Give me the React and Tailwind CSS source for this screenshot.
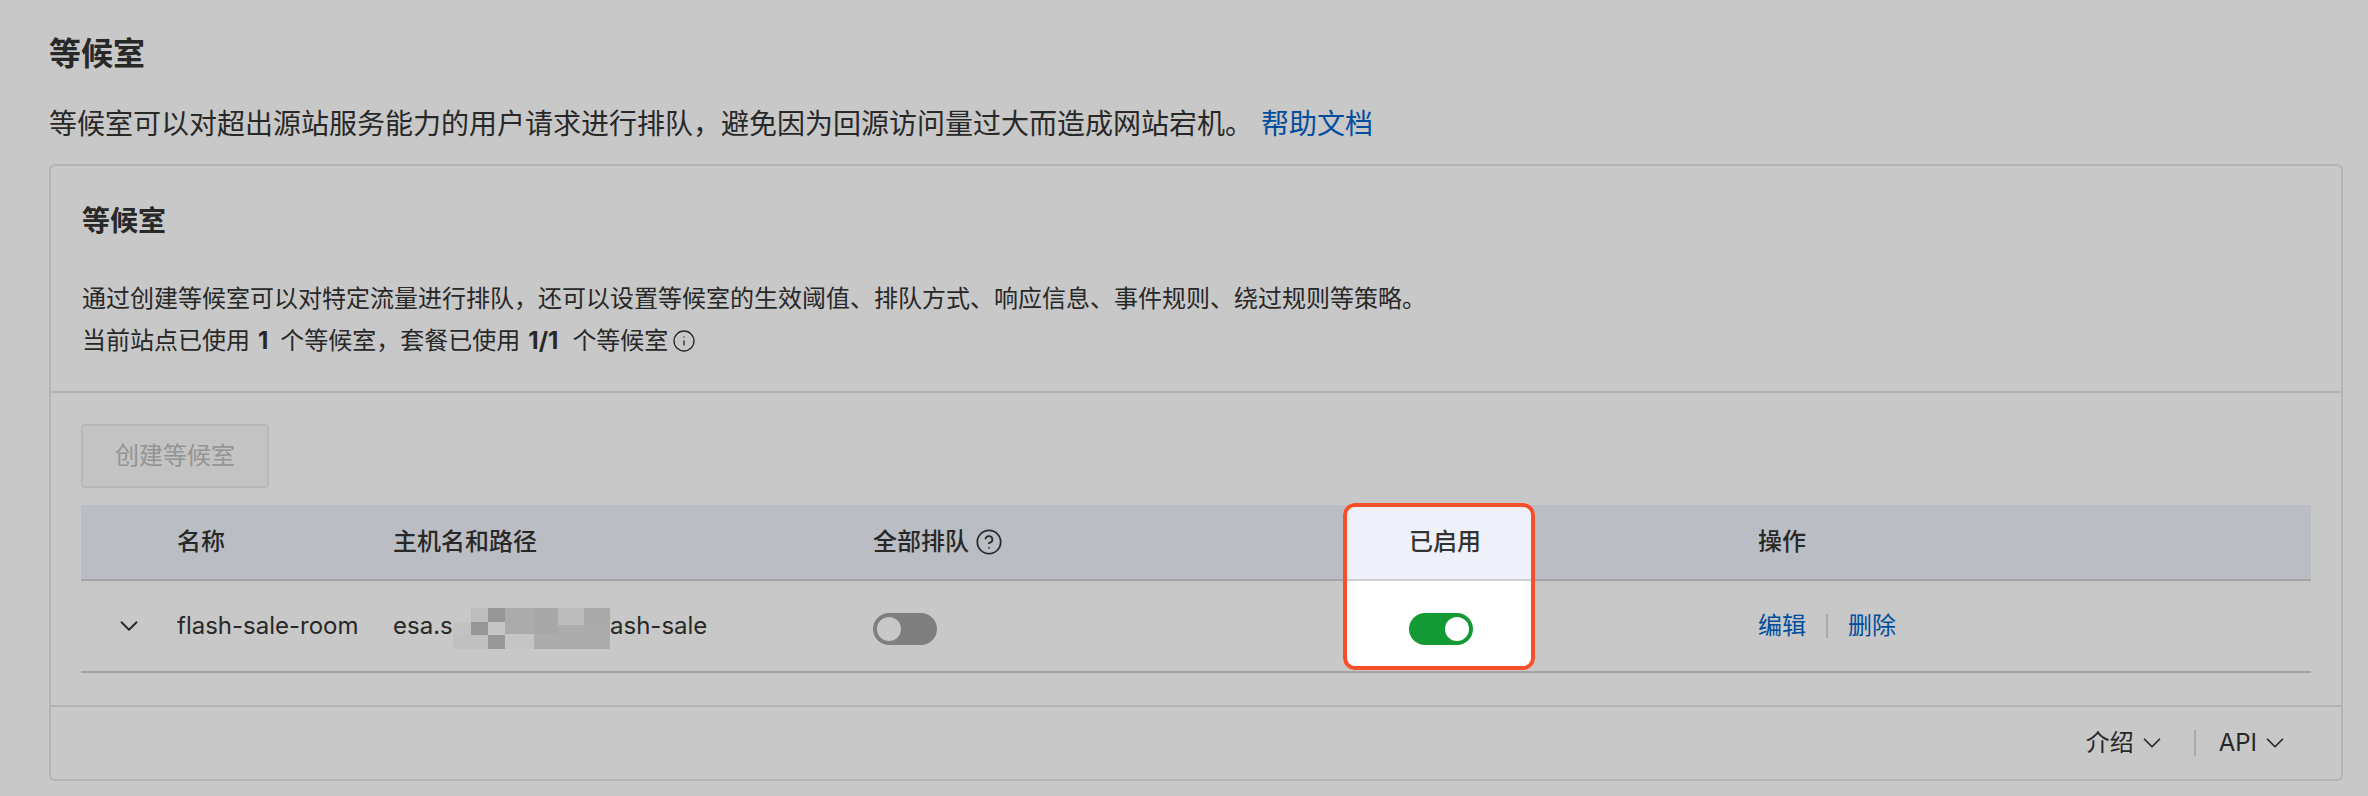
import React from "react";
import { ChevronDown, Info, CircleHelp } from "lucide-react";

function Mosaic() {
  const cells = [
    [18, 0, 17, 14, "#f1f1f1"], [35, 0, 17, 14, "#c0c0c0"], [52, 0, 29, 26, "#dbdbdb"], [81, 0, 24, 26, "#d7d7d7"],
    [105, 0, 26, 17, "#f0f0f0"], [131, 0, 26, 17, "#d9d9d9"], [105, 17, 52, 24, "#dcdcdc"],
    [0, 14, 18, 13, "#f8f8f8"], [18, 14, 17, 13, "#c0c0c0"], [35, 14, 17, 13, "#fdfdfd"],
    [0, 27, 35, 14, "#f5f5f5"], [35, 27, 17, 14, "#c3c3c3"], [52, 26, 29, 15, "#fbfbfb"], [81, 26, 24, 15, "#dcdcdc"],
  ];
  return (
    <svg width="157" height="41" viewBox="0 0 157 41" className="mt-[4px] block shrink-0" shapeRendering="crispEdges">
      {cells.map(([x, y, w, h, c], i) => (
        <rect key={i} x={x} y={y} width={w} height={h} fill={c} />
      ))}
    </svg>
  );
}

function Toggle({ on }) {
  return (
    <div className={`mt-[6px] flex h-8 w-16 items-center rounded-full px-1 ${on ? "justify-end bg-[#149a34]" : "justify-start bg-[#a3a3a3]"}`}>
      <div className="h-6 w-6 rounded-full bg-white" />
    </div>
  );
}

export default function App() {
  return (
    <div className="relative h-[796px] w-[2368px] overflow-hidden bg-white font-['Inter','Noto_Sans_CJK_SC',sans-serif] text-[#333333]">
      <div className="pl-[49px] pr-[25px] pt-[31px]">
        <h1 className="h-[46px] text-[32px] font-bold leading-[46px]">等候室</h1>
        <p className="mt-[25px] flex h-[44px] items-center gap-[8px] text-[28px] leading-[44px]">
          <span>等候室可以对超出源站服务能力的用户请求进行排队，避免因为回源访问量过大而造成网站宕机。</span>
          <a className="text-[#0064c8]">帮助文档</a>
        </p>

        <section className="mt-[18px] h-[617px] rounded-[6px] border-2 border-[#e5e5e5]">
          <div className="h-[227px] border-b-2 border-[#e5e5e5] px-[31px] pt-[35px]">
            <h2 className="h-[40px] text-[28px] font-bold leading-[40px]">等候室</h2>
            <p className="mt-[37px] h-[42px] text-[24px] leading-[42px]">
              通过创建等候室可以对特定流量进行排队，还可以设置等候室的生效阈值、排队方式、响应信息、事件规则、绕过规则等策略。
            </p>
            <p className="flex h-[42px] items-center text-[24px] leading-[42px]">
              <span>当前站点已使用</span>
              <b className="ml-[8px] mr-[12px]">1</b>
              <span>个等候室，套餐已使用</span>
              <b className="ml-[8px] mr-[14px]">1/1</b>
              <span>个等候室</span>
              <Info size={24} strokeWidth={1.3} className="ml-[4px]" />
            </p>
          </div>

          <div className="px-[30px] pt-[31px]">
            <button className="h-[64px] w-[188px] rounded-[4px] border-2 border-[#eaeaea] bg-[#f9f9f9] text-[24px] text-[#bdbdbd]">
              创建等候室
            </button>

            <div className="mt-[17px] grid h-[76px] grid-cols-[96px_216px_480px_536px_349px_1fr] items-center border-b-2 border-[#d1d1d1] bg-[#eef1f9] text-[24px] font-medium">
              <span />
              <span>名称</span>
              <span>主机名和路径</span>
              <span className="flex items-center gap-[6px]">
                全部排队
                <CircleHelp size={28} strokeWidth={1.5} />
              </span>
              <span>已启用</span>
              <span>操作</span>
            </div>

            <div className="grid h-[92px] grid-cols-[96px_216px_480px_536px_349px_1fr] items-center border-b-2 border-[#d1d1d1] text-[24px]">
              <span className="flex justify-center">
                <ChevronDown size={30} strokeWidth={1.5} />
              </span>
              <span>flash-sale-room</span>
              <span className="flex items-center">
                <span className="w-[60px]">esa.s</span>
                <Mosaic />
                <span>ash-sale</span>
              </span>
              <span><Toggle /></span>
              <span><Toggle on /></span>
              <span className="flex items-center text-[#0064c8]">
                <a>编辑</a>
                <span className="mx-[20px] h-[24px] w-[2px] bg-[#d9d9d9]" />
                <a>删除</a>
              </span>
            </div>
          </div>

          <div className="mt-[32px] flex h-[74px] items-center justify-end border-t-2 border-[#e5e5e5] pr-[51px] text-[24px]">
            <span className="flex items-center gap-[3px]">
              介绍
              <ChevronDown size={30} strokeWidth={1.4} />
            </span>
            <span className="ml-[27px] mr-[23px] h-[26px] w-[2px] bg-[#d9d9d9]" />
            <span className="flex items-center gap-[3px]">
              API
              <ChevronDown size={30} strokeWidth={1.4} />
            </span>
          </div>
        </section>
      </div>

      <div className="absolute left-[1343px] top-[503px] h-[167px] w-[192px] rounded-[12px] border-4 border-[#f5502a] shadow-[0_0_0_3000px_rgba(0,0,0,0.215)]" />
    </div>
  );
}
